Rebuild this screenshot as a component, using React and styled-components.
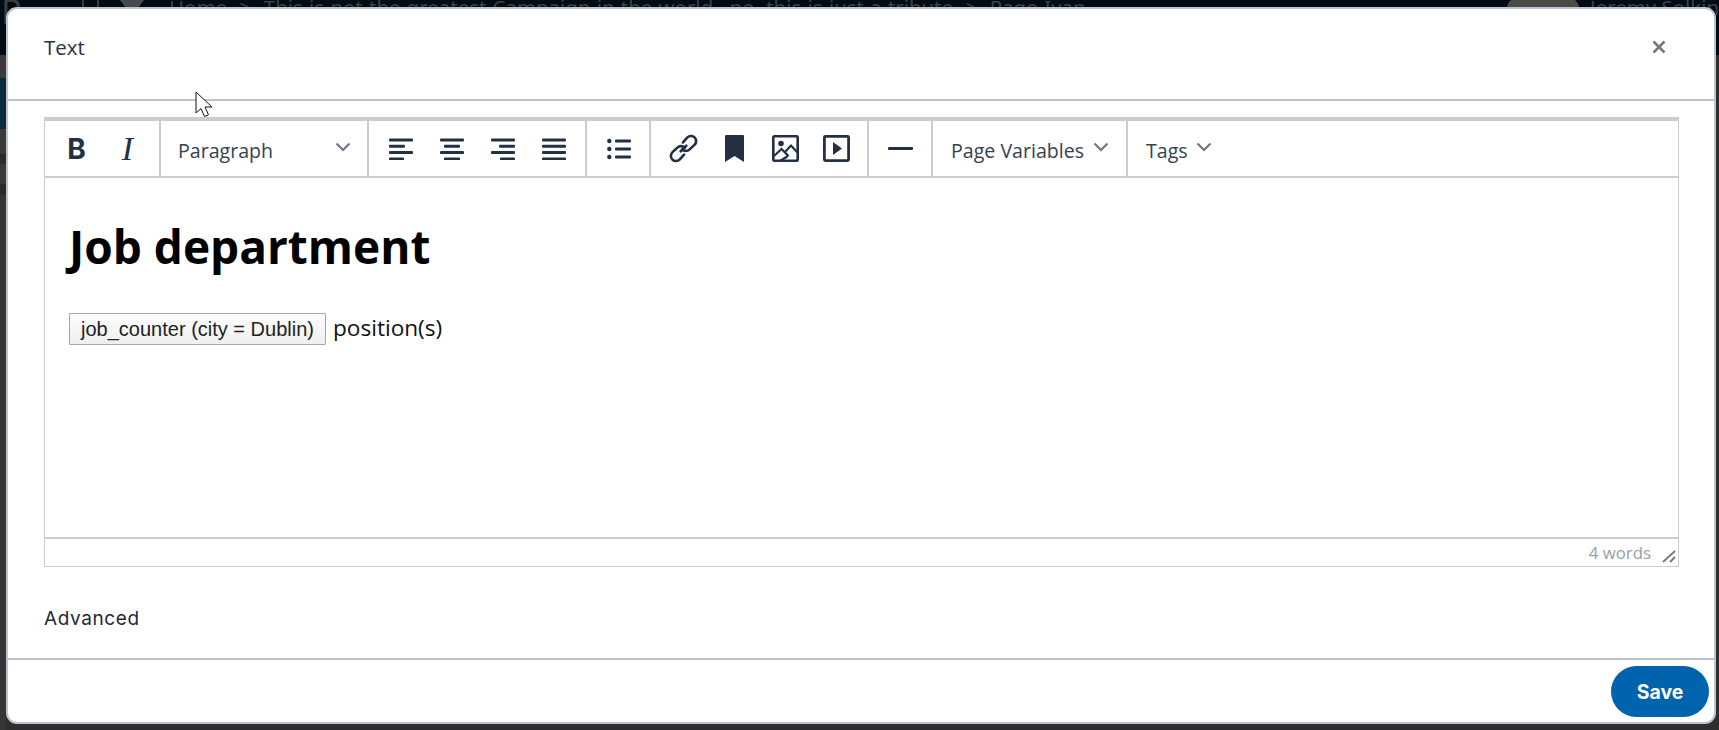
import React from 'react'
import styled, { createGlobalStyle } from 'styled-components'

const GlobalStyle = createGlobalStyle`
  html, body {
    margin: 0;
    padding: 0;
    height: 100%;
    overflow: hidden;
    background: #2e2e2e;
  }
  * { box-sizing: border-box; }
`

const Page = styled.div`
  position: relative;
  width: 1719px;
  height: 730px;
  overflow: hidden;
  background: #2e2e2e;
  font-family: "Open Sans", "Liberation Sans", sans-serif;
`

const TopBar = styled.div`
  height: 55px;
  background: #010b13;
  display: flex;
  align-items: flex-start;
  color: #3b4248;
  font-family: "Noto Sans", sans-serif;
  font-size: 20.4px;
  line-height: 20px;
  white-space: nowrap;
  overflow: hidden;
`

const BigLetter = styled.span`
  color: #3c3c3c;
  font-size: 34px;
  line-height: 22px;
  margin-left: 1px;
  width: 81px;
`

const Divider = styled.span`
  width: 2px;
  height: 14px;
  background: #3c3c3c;
  margin-right: 13px;
`

const Triangle = styled.span`
  width: 0;
  height: 0;
  margin: 0 25px 0 8px;
  border-left: 12px solid transparent;
  border-right: 12px solid transparent;
  border-top: 16px solid #46494c;
`

const Crumbs = styled.span`
  margin-top: -3px;
  width: 1339px;
  word-spacing: 1px;
`

const Avatar = styled.span`
  width: 72px;
  height: 30px;
  margin-top: -8px;
  border-radius: 50%;
  background: #4c4a48;
  margin-right: 11px;
`

const UserName = styled.span`
  margin-top: -3px;
`

const SideStack = styled.div`
  width: 6px;
  display: flex;
  flex-direction: column;
`

const SideBand = styled.div`
  height: ${p => p.$h}px;
  background: ${p => p.$color};
`

const Modal = styled.div`
  position: absolute;
  left: 6px;
  top: 7px;
  width: 1710px;
  height: 717px;
  background: #fff;
  border: 2px solid #b9c6d2;
  border-radius: 11px;
  display: flex;
  flex-direction: column;
`

const ModalHeader = styled.header`
  height: 92px;
  flex: none;
  border-bottom: 2px solid #b9c6d2;
  padding: 25px 48px 0 36px;
  display: flex;
  justify-content: space-between;
  align-items: flex-start;
`

const ModalTitle = styled.h2`
  margin: 0;
  font-family: "Open Sans", sans-serif;
  font-weight: 400;
  font-size: 20.5px;
  line-height: 26px;
  color: #2a3441;
`

const CloseButton = styled.button`
  border: 0;
  padding: 0;
  margin-top: 6px;
  background: none;
  line-height: 0;
`

const ModalBody = styled.div`
  flex: 1;
  padding: 16px 35px 0 36px;
`

const Editor = styled.div`
  width: 1635px;
  height: 450px;
  border: 1px solid #ccc;
  border-top: 4px solid #ccc;
  display: flex;
  flex-direction: column;
`

const Toolbar = styled.div`
  height: 57px;
  flex: none;
  display: flex;
  border-bottom: 2px solid #ccc;
  color: #233044;
`

const ToolGroup = styled.div`
  width: ${p => p.$w}px;
  flex: ${p => (p.$w ? 'none' : 1)};
  display: flex;
  align-items: center;
  padding: 0 ${p => p.$pad ?? 6}px;
  border-right: ${p => (p.$last ? 0 : '2px solid #ccc')};
`

const ToolButton = styled.span`
  width: 51px;
  height: 100%;
  flex: none;
  display: flex;
  align-items: center;
  justify-content: center;
`

const BoldGlyph = styled.span`
  font-family: "Inter", sans-serif;
  font-weight: 700;
  font-size: 28px;
  color: #233044;
`

const ItalicGlyph = styled.span`
  font-family: "Liberation Serif", serif;
  font-style: italic;
  font-size: 34px;
  color: #233044;
`

const DropLabel = styled.span`
  flex: none;
  margin-top: 3px;
  font-family: "Open Sans", sans-serif;
  font-size: 19.6px;
  white-space: nowrap;
  color: #35424f;
`

const DropChevron = styled.span`
  display: flex;
  flex: none;
  margin-left: ${p => p.$gap}px;
  margin-top: -3px;
`

const Content = styled.div`
  flex: 1;
  padding: 0 24px;
  color: #000;
`

const Heading = styled.h1`
  margin: 38px 0 37px;
  font-family: "Open Sans", sans-serif;
  font-weight: 700;
  font-size: 46px;
  line-height: 60px;
`

const Line = styled.p`
  margin: 0;
  display: flex;
  align-items: center;
  font-family: "Open Sans", sans-serif;
  font-size: 22.6px;
  color: #111;
`

const VarChip = styled.button`
  width: 257px;
  height: 32px;
  margin-right: 7px;
  padding: 0;
  font-family: "Liberation Sans", sans-serif;
  font-size: 20px;
  color: #222;
  border: 1px solid #a6a6a6;
  border-radius: 1px;
  background: linear-gradient(#fdfdfd, #efefef);
`

const LineText = styled.span`
  margin-top: -4px;
`

const StatusBar = styled.div`
  height: 29px;
  flex: none;
  border-top: 2px solid #ccc;
  display: flex;
  align-items: center;
  justify-content: flex-end;
  padding-right: 2px;
`

const WordCount = styled.span`
  font-family: "Open Sans", sans-serif;
  font-size: 16.8px;
  color: #979ea6;
  margin-right: 10px;
`

const GripHolder = styled.span`
  display: flex;
  margin: 8px 0 0 1px;
`

const Advanced = styled.div`
  margin-top: 39px;
  font-family: "Inter", sans-serif;
  font-weight: 400;
  font-size: 19px;
  letter-spacing: 0.6px;
  line-height: 26px;
  color: #1f2935;
`

const ModalFooter = styled.footer`
  height: 64px;
  flex: none;
  border-top: 2px solid #b9c6d2;
  display: flex;
  justify-content: flex-end;
  padding: 6px 5px 0 0;
`

const SaveButton = styled.button`
  width: 98px;
  height: 51px;
  border: 0;
  border-radius: 26px;
  background: #0063ad;
  color: #fff;
  font-family: "Inter", sans-serif;
  font-weight: 700;
  font-size: 19.5px;
`

const Cursor = styled.svg`
  position: absolute;
  left: 195px;
  top: 91px;
`

const Chevron = () => (
  <svg width="16" height="10" viewBox="0 0 16 10" fill="none">
    <path d="M1.5 1.5L8 8l6.5-6.5" stroke="#6d7884" strokeWidth="2.2" />
  </svg>
)

const Align = ({ rows }) => (
  <svg width="24" height="22" viewBox="0 0 24 22" fill="#233044">
    {rows.map((r, i) => (
      <rect key={i} x={r[0]} y={0.5 + i * 6.3} width={r[1]} height="3" rx="1" />
    ))}
  </svg>
)

const ListIcon = () => (
  <svg width="24" height="22" viewBox="0 0 24 22" fill="#233044">
    <circle cx="2.3" cy="3" r="2.2" />
    <circle cx="2.3" cy="11" r="2.2" />
    <circle cx="2.3" cy="19" r="2.2" />
    <rect x="8" y="1.6" width="16" height="2.8" rx="1" />
    <rect x="8" y="9.6" width="16" height="2.8" rx="1" />
    <rect x="8" y="17.6" width="16" height="2.8" rx="1" />
  </svg>
)

const LinkIcon = () => (
  <svg width="31" height="31" viewBox="0 0 28 28" fill="none" stroke="#233044" strokeWidth="2.4" strokeLinecap="round">
    <path d="M11.5 16.5l5-5" />
    <path d="M13.5 8.5l3.8-4.3c2-2 5-2 6.7-.2 1.9 1.9 1.9 4.8-.1 6.7l-4.4 4.1c-2 1.9-4.8 1.8-6.5-.1" />
    <path d="M14.5 19.5l-3.8 4.3c-2 2-5 2-6.7.2-1.9-1.9-1.9-4.8.1-6.7l4.4-4.1c2-1.9 4.8-1.8 6.5.1" />
  </svg>
)

const BookmarkIcon = () => (
  <svg width="19" height="27" viewBox="0 0 19 27" fill="#233044">
    <path d="M0 1a1 1 0 0 1 1-1h17a1 1 0 0 1 1 1v26l-9.5-6L0 27z" />
  </svg>
)

const ImageIcon = () => (
  <svg width="27" height="27" viewBox="0 0 27 27" fill="none" stroke="#233044" strokeWidth="2.6">
    <rect x="1.3" y="1.3" width="24.4" height="24.4" rx="1" />
    <circle cx="9" cy="8.5" r="2.8" fill="#233044" stroke="none" />
    <path d="M2 21l7.5-7 7 7M13 17l6-6.5 6.5 7M8 26l8-5" strokeWidth="2.2" />
  </svg>
)

const VideoIcon = () => (
  <svg width="27" height="27" viewBox="0 0 27 27" fill="none" stroke="#233044" strokeWidth="2.8">
    <rect x="1.4" y="1.4" width="24.2" height="24.2" rx="1" />
    <path d="M10 7l9 6.5-9 6.5z" fill="#233044" stroke="none" />
  </svg>
)

const CloseIcon = () => (
  <svg width="14" height="14" viewBox="0 0 14 14" fill="none">
    <path d="M1.5 1.5l11 11M12.5 1.5l-11 11" stroke="#777" strokeWidth="2.5" />
  </svg>
)

const ResizeGrip = () => (
  <svg width="14" height="13" viewBox="0 0 14 13" fill="none" stroke="#777" strokeWidth="1.8">
    <path d="M1 12L13 1M8 12l5-5" />
  </svg>
)

const leftBands = [
  [23, '#3b3b3b'],
  [51, '#0b2b3a'],
  [25, '#3a3a3a'],
  [10, '#2b2b2b'],
  [20, '#3a3a3a'],
  [11, '#2b2b2b'],
  [535, '#363636'],
]

const alignRows = [
  [[0, 24], [0, 16], [0, 24], [0, 15]],
  [[0, 24], [4, 16], [0, 24], [4, 16]],
  [[0, 24], [8, 16], [0, 24], [9, 15]],
  [[0, 24], [0, 24], [0, 24], [0, 24]],
]

export default function App() {
  return (
    <Page>
      <GlobalStyle />
      <TopBar>
        <BigLetter>P</BigLetter>
        <Divider />
        <Divider />
        <Triangle />
        <Crumbs>Home &nbsp;&gt;&nbsp; This is not the greatest Campaign in the world...no, this is just a tribute &nbsp;&gt;&nbsp; Page-Ivan</Crumbs>
        <Avatar />
        <UserName>Jeremy Solkin</UserName>
      </TopBar>
      <SideStack>
        {leftBands.map((b, i) => <SideBand key={i} $h={b[0]} $color={b[1]} />)}
      </SideStack>

      <Modal>
        <ModalHeader>
          <ModalTitle>Text</ModalTitle>
          <CloseButton aria-label="Close"><CloseIcon /></CloseButton>
        </ModalHeader>
        <ModalBody>
          <Editor>
            <Toolbar>
              <ToolGroup $w={116}>
                <ToolButton><BoldGlyph>B</BoldGlyph></ToolButton>
                <ToolButton><ItalicGlyph>I</ItalicGlyph></ToolButton>
              </ToolGroup>
              <ToolGroup $w={208} $pad={17}>
                <DropLabel>Paragraph</DropLabel>
                <DropChevron $gap={62}><Chevron /></DropChevron>
              </ToolGroup>
              <ToolGroup $w={218} $pad={6}>
                {alignRows.map((rows, i) => <ToolButton key={i}><Align rows={rows} /></ToolButton>)}
              </ToolGroup>
              <ToolGroup $w={64}>
                <ToolButton><ListIcon /></ToolButton>
              </ToolGroup>
              <ToolGroup $w={218} $pad={7}>
                <ToolButton><LinkIcon /></ToolButton>
                <ToolButton><BookmarkIcon /></ToolButton>
                <ToolButton><ImageIcon /></ToolButton>
                <ToolButton><VideoIcon /></ToolButton>
              </ToolGroup>
              <ToolGroup $w={64}>
                <ToolButton>
                  <svg width="25" height="3" viewBox="0 0 25 3"><rect width="25" height="3" rx="1" fill="#233044" /></svg>
                </ToolButton>
              </ToolGroup>
              <ToolGroup $w={195} $pad={18}>
                <DropLabel>Page Variables</DropLabel>
                <DropChevron $gap={9}><Chevron /></DropChevron>
              </ToolGroup>
              <ToolGroup $pad={18} $last>
                <DropLabel>Tags</DropLabel>
                <DropChevron $gap={8}><Chevron /></DropChevron>
              </ToolGroup>
            </Toolbar>
            <Content>
              <Heading>Job department</Heading>
              <Line>
                <VarChip>job_counter (city = Dublin)</VarChip>
                <LineText>position(s)</LineText>
              </Line>
            </Content>
            <StatusBar>
              <WordCount>4 words</WordCount>
              <GripHolder><ResizeGrip /></GripHolder>
            </StatusBar>
          </Editor>
          <Advanced>Advanced</Advanced>
        </ModalBody>
        <ModalFooter>
          <SaveButton>Save</SaveButton>
        </ModalFooter>
      </Modal>

      <Cursor width="19" height="27" viewBox="0 0 19 27">
        <path d="M1 1v21l5-4.500 3.500 8 4-1.800-3.500-7.700h7z" fill="#fff" stroke="#111" strokeWidth="1" />
      </Cursor>
    </Page>
  )
}
